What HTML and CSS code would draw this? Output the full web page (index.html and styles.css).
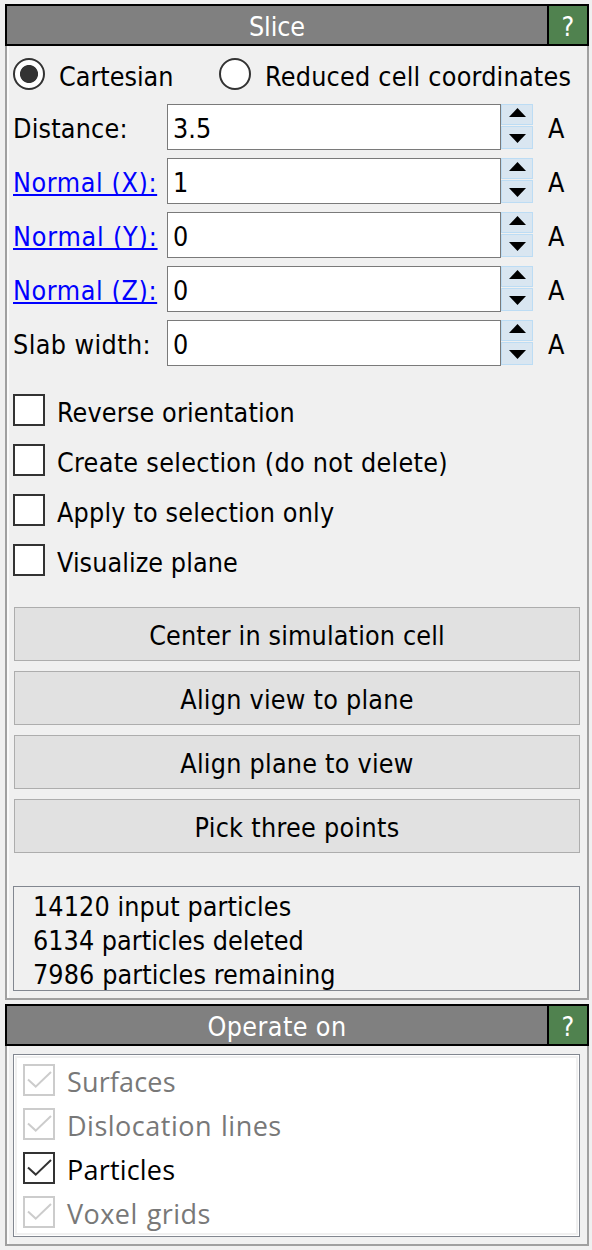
FILE: index.html
```html
<!DOCTYPE html>
<html lang="en">
<head>
<meta charset="utf-8">
<title>Slice</title>
<link rel="stylesheet" href="styles.css">
</head>
<body>
<section class="rollout slice">
  <header class="bar"><h2 class="title t-slice">Slice</h2><span class="help">?</span></header>
  <div class="body">
    <div class="radios">
      <label class="radio first"><span class="dot on"></span><span class="t-cart">Cartesian</span></label>
      <label class="radio"><span class="dot"></span><span class="t-red">Reduced cell coordinates</span></label>
    </div>
    <div class="fields">
      <div class="field"><span class="name">Distance:</span><span class="input">3.5</span><span class="spin"><i class="up"><svg viewBox="0 0 17 9"><path d="M0 9L8.5 0L17 9Z"/></svg></i><i class="down"><svg viewBox="0 0 17 9"><path d="M0 0L8.5 9L17 0Z"/></svg></i></span><span class="unit">A</span></div>
      <div class="field"><span class="name"><a class="link">Normal (X):</a></span><span class="input">1</span><span class="spin"><i class="up"><svg viewBox="0 0 17 9"><path d="M0 9L8.5 0L17 9Z"/></svg></i><i class="down"><svg viewBox="0 0 17 9"><path d="M0 0L8.5 9L17 0Z"/></svg></i></span><span class="unit">A</span></div>
      <div class="field"><span class="name"><a class="link link-y">Normal (Y):</a></span><span class="input">0</span><span class="spin"><i class="up"><svg viewBox="0 0 17 9"><path d="M0 9L8.5 0L17 9Z"/></svg></i><i class="down"><svg viewBox="0 0 17 9"><path d="M0 0L8.5 9L17 0Z"/></svg></i></span><span class="unit">A</span></div>
      <div class="field"><span class="name"><a class="link">Normal (Z):</a></span><span class="input">0</span><span class="spin"><i class="up"><svg viewBox="0 0 17 9"><path d="M0 9L8.5 0L17 9Z"/></svg></i><i class="down"><svg viewBox="0 0 17 9"><path d="M0 0L8.5 9L17 0Z"/></svg></i></span><span class="unit">A</span></div>
      <div class="field"><span class="name t-slab">Slab width:</span><span class="input">0</span><span class="spin"><i class="up"><svg viewBox="0 0 17 9"><path d="M0 9L8.5 0L17 9Z"/></svg></i><i class="down"><svg viewBox="0 0 17 9"><path d="M0 0L8.5 9L17 0Z"/></svg></i></span><span class="unit">A</span></div>
    </div>
    <div class="checks">
      <label class="check"><span class="box"></span><span class="t-rev">Reverse orientation</span></label>
      <label class="check"><span class="box"></span><span class="t-create">Create selection (do not delete)</span></label>
      <label class="check"><span class="box"></span><span class="t-apply">Apply to selection only</span></label>
      <label class="check"><span class="box"></span><span class="t-vis">Visualize plane</span></label>
    </div>
    <div class="buttons">
      <div class="button"><span class="t-center">Center in simulation cell</span></div>
      <div class="button"><span class="t-align">Align view to plane</span></div>
      <div class="button"><span class="t-align">Align plane to view</span></div>
      <div class="button"><span class="t-pick">Pick three points</span></div>
    </div>
    <div class="info">
      <div class="t-in">14120 input particles</div>
      <div class="t-del">6134 particles deleted</div>
      <div class="t-rem">7986 particles remaining</div>
    </div>
  </div>
</section>
<section class="rollout operate">
  <header class="bar"><h2 class="title t-op">Operate on</h2><span class="help">?</span></header>
  <div class="body">
    <div class="list">
      <div class="item off"><span class="box"><svg viewBox="0 0 28 28"><path d="M3 13.5L10.7 20.6L26 6"/></svg></span><span class="t-surf">Surfaces</span></div>
      <div class="item off"><span class="box"><svg viewBox="0 0 28 28"><path d="M3 13.5L10.7 20.6L26 6"/></svg></span><span class="t-dis">Dislocation lines</span></div>
      <div class="item"><span class="box"><svg viewBox="0 0 28 28"><path d="M3 13.5L10.7 20.6L26 6"/></svg></span><span class="t-part">Particles</span></div>
      <div class="item off"><span class="box"><svg viewBox="0 0 28 28"><path d="M3 13.5L10.7 20.6L26 6"/></svg></span><span class="t-vox">Voxel grids</span></div>
    </div>
  </div>
</section>
</body>
</html>
```
FILE: styles.css
```css
* { box-sizing: border-box; }
body {
  margin: 0;
  height: 1250px;
  padding: 4px 3px 4px 5px;
  background: #f0f0f0;
  color: #000;
  font: 26.67px/32px "DejaVu Sans Condensed", "DejaVu Sans", sans-serif;
  font-stretch: condensed;
  letter-spacing: 0.1px;
  white-space: nowrap;
  overflow: hidden;
}
.rollout { width: 584px; display: flex; flex-direction: column; }
.slice { height: 996px; margin-bottom: 4px; }
.operate { height: 242px; }
.bar { display: flex; height: 42px; border: 2px solid #000; background: #808080; color: #fff; }
.title { flex: 1; margin: 0; font-size: inherit; font-weight: 400; text-align: center; line-height: 41px; }
.help { width: 40px; border-left: 2px solid #000; background: #50824f; text-align: center; line-height: 41px; }
.body { flex: 1; border: 2px solid #a0a0a0; border-top: 0; box-shadow: inset 2px 0 #fafafa; padding: 0 7px 0 6px; }
.radios { display: flex; height: 58px; padding-top: 12px; }
.radio { display: flex; gap: 14px; line-height: 38px; }
.radio.first { width: 206px; }
.dot { width: 32px; height: 32px; border: 2px solid #333; border-radius: 50%; background: #fff; }
.dot.on { background: radial-gradient(circle, #333 8.6px, #fff 9.4px); }
.fields { display: flex; flex-direction: column; gap: 8px; }
.field { display: flex; height: 46px; line-height: 50px; }
.name { width: 154px; letter-spacing: 0.2px; }
.link { letter-spacing: 0.6px; color: #00f; text-decoration: underline; text-decoration-thickness: 2px; text-underline-offset: 2px; text-decoration-skip-ink: none; }
.link-y { letter-spacing: 0.8px; }
.input { width: 334px; border: 1px solid #7a7a7a; background: #fff; padding-left: 5px; line-height: 48px; }
.spin { width: 32px; height: 45px; display: flex; flex-direction: column; gap: 1px; }
.spin i { display: flex; justify-content: center; border: 1px solid #bcdcf4; background: #d9e6f1; }
.spin svg { width: 17px; height: 9px; display: block; }
.up { height: 21px; padding-top: 3px; }
.down { height: 23px; padding-top: 7px; }
.unit { margin-left: 15px; }
.checks { display: flex; flex-direction: column; gap: 18px; margin-top: 28px; }
.check { display: flex; gap: 12px; height: 32px; line-height: 38px; }
.box { flex: none; width: 32px; height: 32px; border: 2px solid #333; background: #fff; }
.box svg { display: block; width: 28px; height: 28px; fill: none; stroke: #333; stroke-width: 2; }
.buttons { display: flex; flex-direction: column; gap: 10px; margin: 31px 0 0 1px; }
.button { width: 566px; height: 54px; border: 1px solid #adadad; background: #e1e1e1; text-align: center; line-height: 56px; }
.info { width: 567px; height: 105px; margin-top: 33px; border: 1px solid #828790; padding: 3px 0 0 19px; line-height: 34px; }
.list { width: 567px; height: 183px; margin-top: 8px; border: 1px solid #828790; background: #fff; box-shadow: inset 0 0 0 1px #fff, inset 0 0 0 3px #f0f0f0; padding: 9px 0 0 9px; display: flex; flex-direction: column; gap: 12px; font-family: "Open Sans", "Noto Sans", sans-serif; font-stretch: normal; font-size: 27px; }
.item { display: flex; gap: 12px; height: 32px; line-height: 36px; }
.off { color: #787878; }
.off .box { border-color: #ccc; }
.off svg { stroke: #ccc; }

/* Per-label tracking */
.t-slice { letter-spacing: -0.1px; }
.t-op { letter-spacing: 0.4px; }
.t-cart { letter-spacing: 0; }
.t-red { letter-spacing: 0.23px; }
.t-slab { letter-spacing: 0.4px; }
.t-rev { letter-spacing: 0.15px; }
.t-create { letter-spacing: 0.3px; }
.t-apply { letter-spacing: 0.18px; }
.t-vis { letter-spacing: 0.07px; }
.t-center { letter-spacing: 0.16px; }
.t-align { letter-spacing: 0.24px; }
.t-pick { letter-spacing: 0.3px; }
.t-in { letter-spacing: 0.1px; }
.t-del { letter-spacing: 0.04px; }
.t-rem { letter-spacing: 0.1px; }
.t-surf { letter-spacing: 0.15px; }
.t-dis { letter-spacing: 0.5px; word-spacing: 1.5px; }
.t-part { letter-spacing: 0.2px; }
.t-vox { letter-spacing: 0.45px; word-spacing: 1.5px; }
```
